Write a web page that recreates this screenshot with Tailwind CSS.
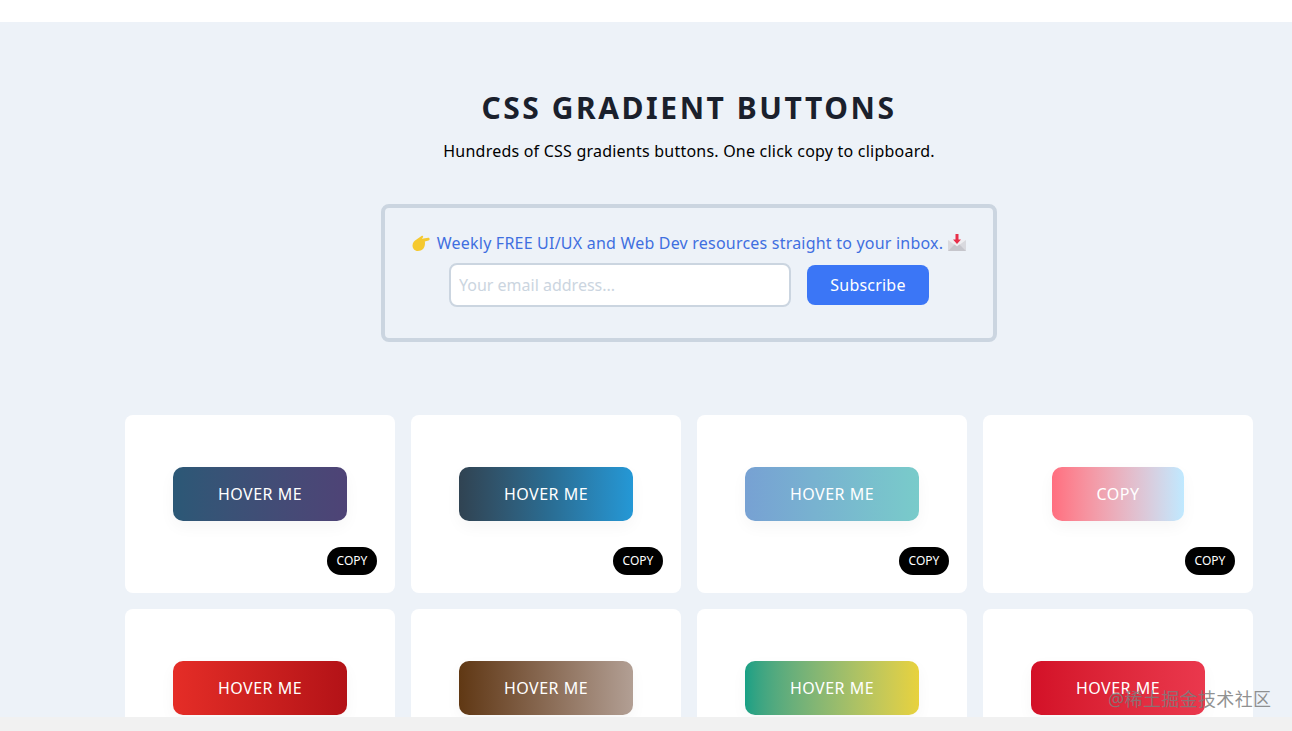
<!DOCTYPE html>
<html lang="en">
<head>
    <meta charset="UTF-8">
    <meta name="viewport" content="width=device-width, initial-scale=1.0">
    <title>CSS Gradient Buttons</title>
    <script src="https://cdn.jsdelivr.net/npm/@tailwindcss/browser@4"></script>
</head>
<body class="bg-white font-['Noto_Sans','Noto_Sans_CJK_SC',sans-serif]">
    <div class="relative flex h-[731px] flex-col overflow-hidden">
        <!-- Top strip -->
        <div class="h-[22px] shrink-0 bg-white"></div>

        <!-- Main Content -->
        <main class="min-h-0 flex-1 overflow-hidden bg-[#edf2f8]">
            <div class="ml-[125px] w-[1128px]">
                <h1 class="mt-[64px] text-center text-[30px] leading-[44px] font-bold tracking-[2.55px] text-[#1a202c]">CSS GRADIENT BUTTONS</h1>
                <p class="mt-[9px] text-center text-base leading-6 tracking-[0.22px] text-black">Hundreds of CSS gradients buttons. One click copy to clipboard.</p>

                <!-- Newsletter -->
                <div class="mx-auto mt-[41px] flex h-[138px] w-[616px] flex-col items-center rounded-lg border-4 border-[#cbd5e0] pt-[23px]">
                    <div class="flex h-6 items-center text-base tracking-[0.21px] text-[#3f6fe0]">
                        <svg class="mr-[7px] h-[18px] w-[18px]" viewBox="0 0 18 18"><path fill="#f5c92f" d="M0.500 11.500C0.500 8.500 2.500 6.500 4.500 5.500L9.500 2c1.200-.7 2.200.6 1.300 1.600L9.800 4.800l6.400-1.100c1.700-.2 2 2.400.3 2.800l-3.700.9c.5 2.500 0 5.500-1.500 7.300C9.700 16 8 17 5.800 17 2.800 17 .5 14.500.5 11.500z"/></svg>
                        <span>Weekly FREE UI/UX and Web Dev resources straight to your inbox.</span>
                        <svg class="ml-[5px] h-[18px] w-[18px]" viewBox="0 0 18 18"><path fill="#d9d9de" d="M0 6h18v11H0z"/><path fill="#eeeef1" d="M0 6l9 6.500L18 6z"/><path fill="#c6c6cc" d="M0 17l6.500-6.500L9 12.500l2.500-2 6.500 6.500z"/><path fill="#e8304a" d="M7.500 0h3v5.500H13L9 10 5 5.500h2.500z"/></svg>
                    </div>
                    <div class="mt-2 flex items-center">
                        <input type="text" placeholder="Your email address..." class="h-[44px] w-[342px] rounded-lg border-2 border-[#cbd5e0] bg-white px-2 text-base placeholder:text-[#cbd5e0]">
                        <button class="ml-4 h-10 w-[122px] rounded-lg bg-[#3b76f6] text-base tracking-[0.2px] text-white">Subscribe</button>
                    </div>
                </div>

                <!-- Button cards -->
                <div class="mt-[73px] grid grid-cols-[repeat(4,270px)] gap-4">
                    <div class="relative flex h-[178px] justify-center rounded-lg bg-white pt-[52px]">
                        <button class="h-[54px] w-[174px] rounded-[10px] bg-linear-to-r from-[#2b5876] to-[#4e4376] text-base tracking-[0.5px] text-white shadow-[0_6px_16px_rgba(0,0,0,0.04)]">HOVER ME</button>
                        <span class="absolute right-[18px] bottom-[18px] flex h-7 w-[50px] items-center justify-center rounded-full bg-black text-xs text-white">COPY</span>
                    </div>
                    <div class="relative flex h-[178px] justify-center rounded-lg bg-white pt-[52px]">
                        <button class="h-[54px] w-[174px] rounded-[10px] bg-linear-to-r from-[#304352] via-[#2a6b90] to-[#2498d6] text-base tracking-[0.5px] text-white shadow-[0_6px_16px_rgba(0,0,0,0.04)]">HOVER ME</button>
                        <span class="absolute right-[18px] bottom-[18px] flex h-7 w-[50px] items-center justify-center rounded-full bg-black text-xs text-white">COPY</span>
                    </div>
                    <div class="relative flex h-[178px] justify-center rounded-lg bg-white pt-[52px]">
                        <button class="h-[54px] w-[174px] rounded-[10px] bg-linear-to-r from-[#77a1d3] to-[#79cbca] text-base tracking-[0.5px] text-white shadow-[0_6px_16px_rgba(0,0,0,0.04)]">HOVER ME</button>
                        <span class="absolute right-[18px] bottom-[18px] flex h-7 w-[50px] items-center justify-center rounded-full bg-black text-xs text-white">COPY</span>
                    </div>
                    <div class="relative flex h-[178px] justify-center rounded-lg bg-white pt-[52px]">
                        <button class="h-[54px] w-[132px] rounded-[10px] bg-linear-to-r from-[#ff6e7f] to-[#bfe9ff] text-base tracking-[0.5px] text-white shadow-[0_6px_16px_rgba(0,0,0,0.04)]">COPY</button>
                        <span class="absolute right-[18px] bottom-[18px] flex h-7 w-[50px] items-center justify-center rounded-full bg-black text-xs text-white">COPY</span>
                    </div>
                    <div class="relative flex h-[178px] justify-center rounded-lg bg-white pt-[52px]">
                        <button class="h-[54px] w-[174px] rounded-[10px] bg-linear-to-r from-[#e52d27] to-[#b31217] text-base tracking-[0.5px] text-white shadow-[0_6px_16px_rgba(0,0,0,0.04)]">HOVER ME</button>
                    </div>
                    <div class="relative flex h-[178px] justify-center rounded-lg bg-white pt-[52px]">
                        <button class="h-[54px] w-[174px] rounded-[10px] bg-linear-to-r from-[#603813] to-[#b29f94] text-base tracking-[0.5px] text-white shadow-[0_6px_16px_rgba(0,0,0,0.04)]">HOVER ME</button>
                    </div>
                    <div class="relative flex h-[178px] justify-center rounded-lg bg-white pt-[52px]">
                        <button class="h-[54px] w-[174px] rounded-[10px] bg-linear-to-r from-[#16a085] to-[#e8d23c] text-base tracking-[0.5px] text-white shadow-[0_6px_16px_rgba(0,0,0,0.04)]">HOVER ME</button>
                    </div>
                    <div class="relative flex h-[178px] justify-center rounded-lg bg-white pt-[52px]">
                        <button class="h-[54px] w-[174px] rounded-[10px] bg-linear-to-r from-[#d31027] to-[#ea384d] text-base tracking-[0.5px] text-white shadow-[0_6px_16px_rgba(0,0,0,0.04)]">HOVER ME</button>
                    </div>
                </div>
            </div>
        </main>

        <!-- Bottom strip -->
        <div class="h-[14px] shrink-0 bg-[#f1f1f1]"></div>

        <!-- Watermark -->
        <span class="absolute top-[686px] left-[1108px] text-lg leading-[26px] tracking-[0.35px] text-[#7d7d7d]/85">@稀土掘金技术社区</span>
    </div>
</body>
</html>
